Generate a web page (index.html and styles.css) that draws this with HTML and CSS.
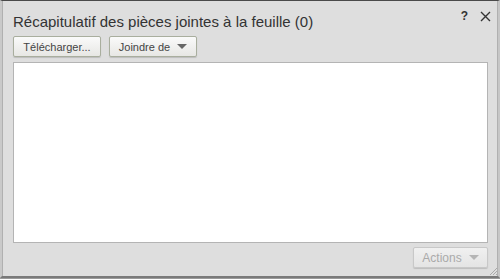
FILE: index.html
```html
<!DOCTYPE html>
<html>
<head>
<meta charset="utf-8">
<link rel="stylesheet" href="styles.css">
</head>
<body>
<div class="dialog">
  <div class="header">
    <div class="title">Récapitulatif des pièces jointes à la feuille (0)</div>
    <div class="tools">
      <span class="help">?</span>
      <svg class="close" width="11" height="11" viewBox="0 0 11 11"><path d="M1 1 L10 10 M10 1 L1 10" stroke="#333" stroke-width="1.4" fill="none"/></svg>
    </div>
  </div>
  <div class="toolbar">
    <button class="btn btn-upload">Télécharger...</button>
    <button class="btn btn-attach">Joindre de <span class="caret"></span></button>
  </div>
  <div class="content"></div>
  <div class="footer">
    <button class="btn btn-actions">Actions <span class="caret caret-light"></span></button>
  </div>
  <svg class="grip" width="10" height="10" viewBox="0 0 10 10"><path d="M9 2 L2 9 M9 5 L5 9 M9 8 L8 9" stroke="#aaa" stroke-width="1" fill="none"/></svg>
</div>
</body>
</html>
```

FILE: styles.css
```css
html, body {
  margin: 0;
  padding: 0;
  background: #9a9a9a;
}
body {
  width: 500px;
  height: 279px;
  overflow: hidden;
  font-family: Arial, "Liberation Sans", sans-serif;
}
.dialog {
  position: relative;
  box-sizing: border-box;
  width: 500px;
  height: 278px;
  background: #dedede;
  border-top: 1px solid #4a4a4a;
  border-bottom: 2px solid #7a7a7a;
  border-left: 2px solid #c9c9c9;
  border-right: 2px solid #c6c6c6;
  box-shadow: inset 1px 0 0 #b0b0b0, inset -1px 0 0 #b0b0b0;
  display: flex;
  flex-direction: column;
  padding: 0 10px 0 11px;
}
.header {
  display: flex;
  justify-content: space-between;
  align-items: flex-start;
  height: 35px;
}
.title {
  font-size: 15px;
  color: #333;
  padding-top: 12px;
}
.tools {
  display: flex;
  align-items: center;
  gap: 12px;
  padding-top: 8px;
  margin-right: -3px;
}
.help {
  font-size: 12px;
  font-weight: bold;
  color: #333;
}
.close {
  display: block;
}
.toolbar {
  display: flex;
  gap: 8px;
  height: 26px;
}
.btn {
  box-sizing: border-box;
  height: 21px;
  border: 1px solid #a9ae9e;
  border-radius: 2px;
  background: linear-gradient(#fafafa, #e7e7e4);
  box-shadow: 0 1px 1px rgba(0,0,0,0.15);
  font-family: Arial, "Liberation Sans", sans-serif;
  font-size: 11px;
  color: #444;
  padding: 0;
  display: flex;
  align-items: center;
  justify-content: center;
  gap: 7px;
}
.btn-upload { width: 88px; }
.btn-attach { width: 88px; }
.caret {
  width: 0;
  height: 0;
  border-left: 5px solid transparent;
  border-right: 5px solid transparent;
  border-top: 5px solid #666;
}
.caret-light { border-top-color: #b5b5b5; }
.content {
  height: 181px;
  box-sizing: border-box;
  background: #fff;
  border: 1px solid #b4b4b4;
}
.footer {
  display: flex;
  justify-content: flex-end;
  padding-top: 4px;
}
.btn-actions {
  width: 75px;
  font-size: 12px;
  color: #aaa;
  background: linear-gradient(#f0f0f0, #e4e4e4);
  border-color: #c8c8c8;
}
.grip {
  position: absolute;
  right: 0;
  bottom: 0;
}
```
